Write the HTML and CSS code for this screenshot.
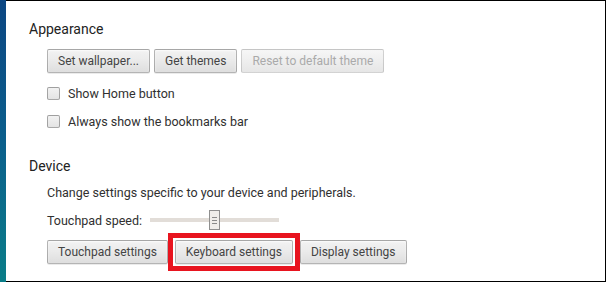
FILE: index.html
```html
<!DOCTYPE html>
<html lang="en">
<head>
  <meta charset="UTF-8">
  <title>Settings</title>
  <link rel="stylesheet" href="styles.css">
</head>
<body>
  <div class="desktop">
    <div class="wallpaper"></div>

    <div class="window">
      <section class="settings-section">
        <h3>Appearance</h3>
        <div class="section-body">
          <div class="button-row">
            <button class="btn">Set wallpaper...</button>
            <button class="btn">Get themes</button>
            <button class="btn" disabled>Reset to default theme</button>
          </div>
          <label class="checkbox-row">
            <span class="checkbox"></span>
            <span>Show Home button</span>
          </label>
          <label class="checkbox-row">
            <span class="checkbox"></span>
            <span>Always show the bookmarks bar</span>
          </label>
        </div>
      </section>

      <section class="settings-section device">
        <h3>Device</h3>
        <div class="section-body">
          <p class="description">Change settings specific to your device and peripherals.</p>
          <div class="slider-row">
            <span>Touchpad speed:</span>
            <div class="slider">
              <div class="slider-track"></div>
              <div class="slider-thumb">
                <span></span><span></span><span></span>
              </div>
            </div>
          </div>
          <div class="button-row bottom-row">
            <button class="btn">Touchpad settings</button>
            <span class="highlight-wrap">
              <button class="btn">Keyboard settings</button>
              <span class="highlight"></span>
            </span>
            <button class="btn">Display settings</button>
          </div>
        </div>
      </section>
    </div>
  </div>
</body>
</html>
```

FILE: styles.css
```css
* {
  margin: 0;
  padding: 0;
  box-sizing: border-box;
}

body {
  font-family: Roboto, 'Liberation Sans', sans-serif;
  background-color: white;
  color: #303030;
}

.desktop {
  display: flex;
  height: 282px;
}

.wallpaper {
  width: 6px;
  background: linear-gradient(to bottom, #0c4682, #0b5f8c 50%, #0a7d88);
}

.window {
  width: 600px;
  background-color: white;
  border-top: 1px solid #000;
  border-right: 1px solid #000;
  border-bottom: 1px solid #000;
  padding: 18px 0 0 23px;
}

.settings-section h3 {
  font-size: 14px;
  font-weight: normal;
  line-height: 20px;
  color: #222;
}

.section-body {
  padding-left: 18px;
  font-size: 12.5px;
}

.button-row {
  display: flex;
  gap: 4px;
  margin-top: 10px;
}

.btn {
  height: 24px;
  padding: 0 10px;
  font-family: Roboto, 'Liberation Sans', sans-serif;
  font-size: 12px;
  color: #444;
  background: linear-gradient(to bottom, #f2f2f2, #ececec 40%, #dedede);
  border: 1px solid rgba(0, 0, 0, 0.25);
  border-radius: 2px;
  box-shadow: 0 1px 0 rgba(0, 0, 0, 0.08), inset 0 1px 2px rgba(255, 255, 255, 0.75);
}

.btn:disabled {
  color: #aaa;
  background: linear-gradient(to bottom, #f6f6f6, #f0f0f0 40%, #e6e6e6);
  border-color: rgba(0, 0, 0, 0.14);
  box-shadow: none;
}

.checkbox-row {
  display: flex;
  align-items: center;
  gap: 8px;
  height: 28px;
}

.button-row + .checkbox-row {
  margin-top: 6px;
}

.checkbox {
  width: 13px;
  height: 13px;
  border: 1px solid rgba(0, 0, 0, 0.3);
  border-radius: 2px;
  background: linear-gradient(to bottom, #f2f2f2, #e4e4e4);
}

.device {
  margin-top: 21px;
}

.description {
  line-height: 18px;
  margin-top: 8px;
}

.slider-row {
  display: flex;
  align-items: center;
  height: 20px;
  margin-top: 8px;
}

.slider {
  position: relative;
  width: 129px;
  height: 20px;
  margin-left: 8px;
  display: flex;
  align-items: center;
}

.slider-track {
  width: 100%;
  height: 4px;
  background-color: #e2ddd8;
}

/* thumb sits over the track */
.slider-thumb {
  position: absolute;
  left: 59px;
  top: 0;
  width: 11px;
  height: 20px;
  background-color: #efedea;
  border: 1px solid #8f8f8f;
  display: flex;
  flex-direction: column;
  align-items: center;
  justify-content: center;
  gap: 2px;
}

.slider-thumb span {
  width: 5px;
  height: 1px;
  background-color: #8a8a8a;
}

.bottom-row {
  gap: 7px;
}

.highlight-wrap {
  position: relative;
  display: flex;
}

.highlight {
  position: absolute;
  top: -7px;
  right: -7px;
  bottom: -7px;
  left: -7px;
  border: 5px solid #e8141f;
}
```
